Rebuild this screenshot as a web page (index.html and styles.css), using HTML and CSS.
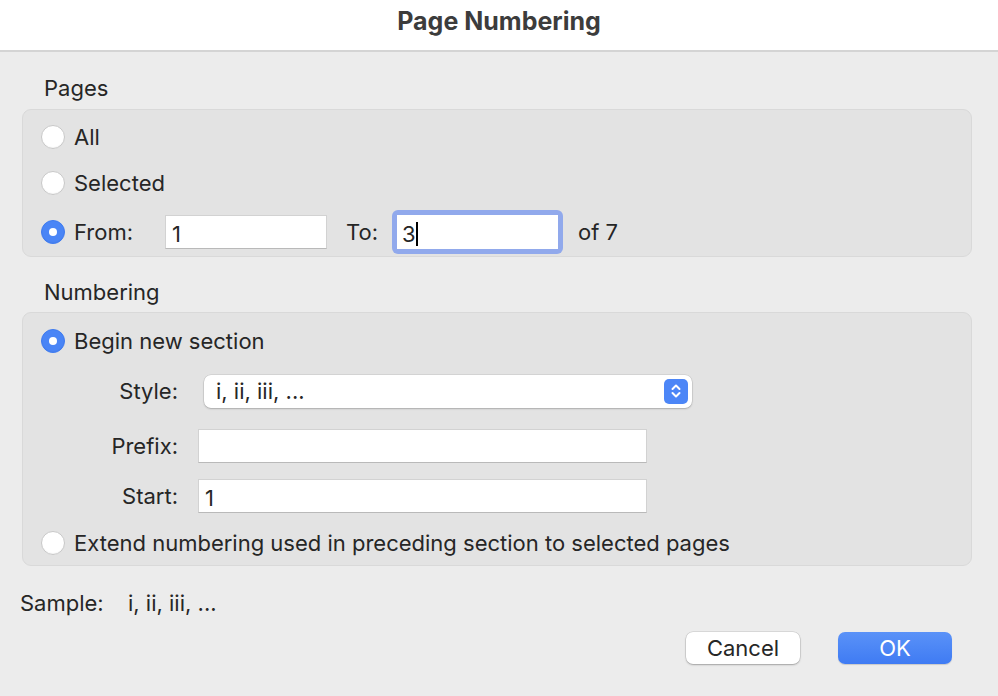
FILE: index.html
```html
<!DOCTYPE html>
<html>
<head>
<meta charset="utf-8">
<link rel="stylesheet" href="styles.css">
</head>
<body>
<div class="dialog">
  <header class="titlebar">Page Numbering</header>
  <main class="content">
    <div class="group-label">Pages</div>
    <section class="box box-pages">
      <div class="row"><span class="radio"></span><span>All</span></div>
      <div class="row"><span class="radio"></span><span>Selected</span></div>
      <div class="row row-from">
        <span class="radio on"></span><span class="from-label">From:</span>
        <div class="field field-from">1</div>
        <span class="to-label">To:</span>
        <div class="focus-ring"><div class="field field-to">3<span class="caret"></span></div></div>
        <span class="of">of 7</span>
      </div>
    </section>
    <div class="group-label second">Numbering</div>
    <section class="box box-num">
      <div class="row"><span class="radio on"></span><span>Begin new section</span></div>
      <div class="form-row style-row">
        <span class="flabel">Style:</span>
        <div class="popup">
          <span>i, ii, iii, ...</span>
          <span class="stepper"><svg width="12" height="18" viewBox="0 0 12 18"><path d="M2.5 7 L6 3.5 L9.5 7 M2.5 11 L6 14.5 L9.5 11" fill="none" stroke="#fff" stroke-width="2" stroke-linecap="round" stroke-linejoin="round"/></svg></span>
        </div>
      </div>
      <div class="form-row prefix-row">
        <span class="flabel">Prefix:</span>
        <div class="field field-wide"></div>
      </div>
      <div class="form-row start-row">
        <span class="flabel">Start:</span>
        <div class="field field-wide">1</div>
      </div>
      <div class="row row-extend"><span class="radio"></span><span>Extend numbering used in preceding section to selected pages</span></div>
    </section>
    <div class="sample"><span class="sample-label">Sample:</span><span class="sample-val">i, ii, iii, ...</span></div>
    <div class="buttons">
      <button class="btn cancel">Cancel</button>
      <button class="btn ok">OK</button>
    </div>
  </main>
</div>
</body>
</html>
```

FILE: styles.css
```css
html, body {
  margin: 0;
  padding: 0;
  background: #ececec;
}
body {
  width: 998px;
  height: 696px;
  overflow: hidden;
  font-family: Inter, "Noto Sans", "Liberation Sans", sans-serif;
  color: #262626;
  font-size: 22px;
}
.dialog {
  width: 998px;
  height: 696px;
  background: #ececec;
  display: flex;
  flex-direction: column;
}
.titlebar {
  height: 41px;
  background: #ffffff;
  border-bottom: 2px solid #d4d4d4;
  display: flex;
  align-items: center;
  justify-content: center;
  font-weight: 700;
  font-size: 25px;
  color: #3c3c3c;
  padding-bottom: 9px;
  box-sizing: content-box;
}
.content {
  padding: 0 26px 0 22px;
  display: flex;
  flex-direction: column;
}
.group-label {
  padding-left: 22px;
  height: 24px;
  line-height: 24px;
  margin-top: 24px;
  margin-bottom: 9px;
}
.group-label.second { margin-top: 23px; margin-bottom: 8px; }
.box {
  background: #e3e3e3;
  border: 1px solid #d9d9d9;
  border-radius: 9px;
  box-sizing: border-box;
  padding: 0 0 0 19px;
  display: flex;
  flex-direction: column;
}
.box-pages {
  height: 148px;
  padding-top: 14px;
}
.box-num {
  height: 254px;
  padding-top: 15px;
}
.row {
  display: flex;
  align-items: center;
  height: 26px;
}
.row + .row { margin-top: 20px; }
.box-pages .row-from { margin-top: 19px; height: 34px; }
.radio {
  width: 24px;
  height: 24px;
  border-radius: 50%;
  background: #ffffff;
  border: 1px solid #c8c8c8;
  box-sizing: border-box;
  margin-right: 9px;
  margin-left: -1px;
  flex: none;
  box-shadow: inset 0 -1px 1px rgba(0,0,0,0.04);
}
.radio.on {
  background: #4a85f6;
  border-color: #3f7bef;
  position: relative;
}
.radio.on::after {
  content: "";
  position: absolute;
  left: 7px;
  top: 7px;
  width: 8px;
  height: 8px;
  border-radius: 50%;
  background: #fff;
}
.field {
  background: #fff;
  border: 1px solid #d2d2d2;
  border-bottom-color: #b9b9b9;
  box-sizing: border-box;
  height: 34px;
  padding-left: 6px;
  display: flex;
  align-items: center;
  padding-top: 3px;
}
.from-label { width: 91px; flex: none; }
.field-from { width: 162px; }
.to-label { margin-left: 19px; width: 46px; flex: none; }
.focus-ring {
  background: #91a9ec;
  border-radius: 6px;
  padding: 5px;
  width: 171px;
  height: 44px;
  box-sizing: border-box;
  flex: none;
}
.field-to {
  border: none;
  width: 100%;
  height: 100%;
  padding-left: 5px;
}
.caret {
  display: inline-block;
  width: 2px;
  height: 24px;
  background: #000;
}
.of { margin-left: 15px; }
.form-row {
  display: flex;
  align-items: center;
}
.flabel {
  width: 136px;
  text-align: right;
  flex: none;
}
.style-row { margin-top: 20px; height: 34px; }
.popup {
  margin-left: 26px;
  width: 488px;
  height: 33px;
  background: #fff;
  border-radius: 7px;
  box-shadow: 0 0 0 0.5px rgba(0,0,0,0.12), 0 1px 2px rgba(0,0,0,0.2);
  display: flex;
  align-items: center;
  justify-content: space-between;
  padding: 0 4px 0 12px;
  box-sizing: border-box;
}
.stepper {
  width: 24px;
  height: 25px;
  border-radius: 5px;
  background: #4c86f7;
  display: flex;
  align-items: center;
  justify-content: center;
}
.prefix-row { margin-top: 21px; }
.start-row { margin-top: 16px; }
.field-wide {
  margin-left: 20px;
  width: 449px;
}
.box-num .row-extend { margin-top: 17px; }
.sample {
  margin-top: 25px;
  margin-left: -2px;
  display: flex;
  height: 24px;
  align-items: center;
}
.sample-label { width: 108px; }
.buttons {
  display: flex;
  justify-content: flex-end;
  gap: 38px;
  margin-top: 17px;
  margin-right: 20px;
}
.btn {
  width: 114px;
  height: 32px;
  border-radius: 7px;
  border: none;
  font-family: inherit;
  font-size: 22px;
  padding: 0;
}
.cancel {
  background: #fff;
  color: #262626;
  box-shadow: 0 0 0 0.5px rgba(0,0,0,0.15), 0 1px 2px rgba(0,0,0,0.25);
}
.ok {
  background: linear-gradient(#5a92f8, #3f7bf3);
  color: #fff;
  box-shadow: 0 1px 1px rgba(0,0,0,0.15);
}
```
